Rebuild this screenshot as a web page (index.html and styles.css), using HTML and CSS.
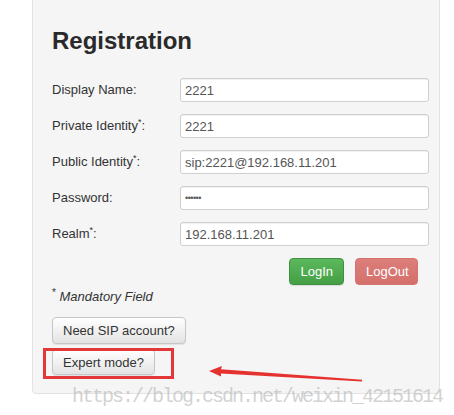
FILE: index.html
```html
<!DOCTYPE html>
<html>
<head>
<meta charset="utf-8">
<link rel="stylesheet" href="styles.css">
</head>
<body>
<div class="page">
  <div class="panel">
    <h2 class="title">Registration</h2>
    <div class="form">
      <div class="row"><label class="lbl">Display Name:</label><input class="inp" type="text" value="2221"></div>
      <div class="row"><label class="lbl">Private Identity<sup class="ast">*</sup>:</label><input class="inp" type="text" value="2221"></div>
      <div class="row"><label class="lbl">Public Identity<sup class="ast">*</sup>:</label><input class="inp" type="text" value="sip:2221@192.168.11.201"></div>
      <div class="row"><label class="lbl">Password:</label><input class="inp pw" type="password" value="222100"></div>
      <div class="row"><label class="lbl">Realm<sup class="ast">*</sup>:</label><input class="inp" type="text" value="192.168.11.201"></div>
    </div>
    <div class="actions">
      <button class="btn btn-green">LogIn</button>
      <button class="btn btn-red">LogOut</button>
    </div>
    <p class="mandatory"><sup class="ast">*</sup> <i>Mandatory Field</i></p>
    <button class="btn btn-default">Need SIP account?</button>
    <button class="btn btn-default btn-expert">Expert mode?</button>
  </div>
  <svg class="annot" width="454" height="415" viewBox="0 0 454 415">
    <rect x="44.5" y="349.5" width="128" height="28" fill="none" stroke="#e2383a" stroke-width="3"/>
    <polygon points="209,371 222,366 221,369.3 362,379.8 362,381.4 221,373.6 221,376.5" fill="#e5322f"/>
  </svg>
  <div class="watermark">https://blog.csdn.net/weixin_42151614</div>
</div>
</body>
</html>
```
FILE: styles.css
```css
html, body {
  margin: 0;
  padding: 0;
  background: #ffffff;
}
.page {
  position: relative;
  width: 454px;
  height: 415px;
  overflow: hidden;
  font-family: "Liberation Sans", Arial, sans-serif;
  color: #333;
}
.panel {
  margin-left: 32px;
  margin-top: -10px;
  width: 378px;
  padding: 37px 10px 18px 18px;
  background: #f5f5f5;
  border: 1px solid #e3e3e3;
  border-radius: 4px;
  display: flex;
  flex-direction: column;
  align-items: flex-start;
  box-shadow: inset 0 1px 1px rgba(0,0,0,0.03);
}
.title {
  margin: 0 0 0 1px;
  font-size: 24px;
  font-weight: bold;
  line-height: 26px;
  color: #2a2a2a;
}
.form {
  margin-top: 24px;
  display: flex;
  flex-direction: column;
  gap: 12px;
  align-self: stretch;
}
.row {
  display: flex;
  align-items: center;
  height: 24px;
}
.lbl {
  width: 129px;
  padding-left: 1px;
  box-sizing: border-box;
  font-size: 13px;
  line-height: 16px;
  color: #333;
}
.ast {
  font-size: 9px;
  vertical-align: 5px;
  line-height: 0;
}
.inp {
  flex: 1;
  min-width: 0;
  height: 24px;
  box-sizing: border-box;
  margin: 0;
  padding: 0 4px;
  border: 1px solid #cfcfcf;
  border-radius: 3px;
  background: #fff;
  font-family: "Liberation Sans", Arial, sans-serif;
  font-size: 13px;
  color: #555;
  box-shadow: inset 0 1px 1px rgba(0,0,0,0.06);
}
.pw {
  font-size: 9px;
  letter-spacing: -0.5px;
}
.actions {
  margin-top: 12px;
  align-self: stretch;
  display: flex;
  justify-content: flex-end;
  gap: 11px;
  padding-right: 11px;
}
.btn {
  height: 27px;
  padding: 0 10px;
  border-radius: 4px;
  font-family: "Liberation Sans", Arial, sans-serif;
  font-size: 13px;
  line-height: 25px;
  cursor: pointer;
  margin: 0;
}
.btn-green {
  color: #fff;
  background: linear-gradient(#5cb85c, #45a045);
  border: 1px solid #3e8f3e;
  box-shadow: 0 1px 1px rgba(0,0,0,0.1);
}
.btn-red {
  color: #fff;
  width: 63px;
  background: linear-gradient(#dc7e7a, #d4706c);
  border: 1px solid #d6726e;
}
.mandatory {
  margin: 4px 0 0 1px;
  font-size: 13px;
  line-height: 16px;
  color: #333;
}
.mandatory .ast {
  font-size: 10px;
}
.btn-default {
  margin-top: 12px;
  margin-left: 1px;
  color: #333;
  background: linear-gradient(#ffffff, #e3e3e3);
  border: 1px solid #c6c6c6;
  box-shadow: 0 1px 1px rgba(0,0,0,0.08);
}
.btn-expert {
  margin-top: 5px;
  height: 26px;
}
.annot {
  position: absolute;
  left: 0;
  top: 0;
  pointer-events: none;
}
.watermark {
  position: absolute;
  left: 72px;
  top: 387px;
  font-family: "Liberation Mono", "Courier New", monospace;
  font-size: 20px;
  letter-spacing: -2px;
  line-height: 20px;
  color: rgba(185, 185, 185, 0.65);
  white-space: nowrap;
  pointer-events: none;
}
```
